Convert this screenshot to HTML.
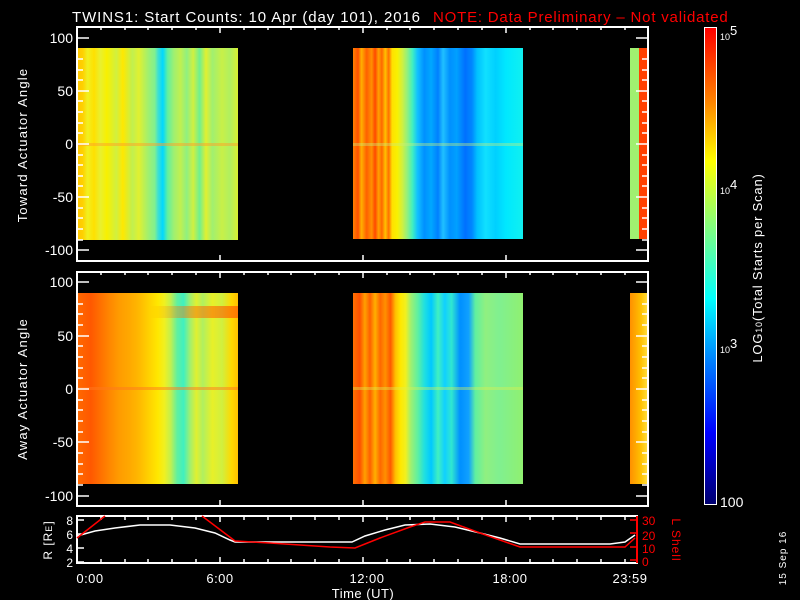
<!DOCTYPE html>
<html><head><meta charset="utf-8"><style>
body{margin:0;background:#000;width:800px;height:600px;overflow:hidden;position:relative;font-family:"Liberation Sans",sans-serif}
.d{position:absolute}
</style></head><body>
<!-- top panel data -->
<div class="d" style="left:78px;top:48px;width:160px;height:192px;background:linear-gradient(90deg,#ffc800 0,#ffd000 3%,#f0f020 6%,#ffe000 10%,#e8f030 14%,#f8f000 18%,#d0f040 24%,#ffe800 28%,#c0f050 34%,#e0f030 38%,#a0f070 44%,#80f090 48%,#40e0d0 50%,#00d8ff 53%,#60f0a0 56%,#a0f070 60%,#c0f050 64%,#90f080 68%,#d0f040 72%,#70f090 76%,#e0f030 80%,#a0f070 84%,#c8f048 90%,#b0f060 95%,#d8f030 100%)"></div>
<div class="d" style="left:353px;top:48px;width:170px;height:191px;background:linear-gradient(90deg,#ff8000 0,#ff5000 3%,#ffb000 5%,#ff6000 8%,#ff9000 11%,#ff4800 13%,#ffa000 15%,#ff6800 17%,#ffc000 19%,#ff7000 21%,#ffe000 23%,#f8f000 26%,#d0f040 29%,#90f080 32%,#40f0c0 35%,#10c0ff 38%,#0090ff 42%,#00a8ff 46%,#0080ff 50%,#20c0ff 53%,#0090ff 57%,#00a0ff 61%,#0070ff 66%,#0088ff 70%,#00c0ff 73%,#10e0ff 78%,#00d0ff 84%,#00e8ff 90%,#10f0f0 100%)"></div>
<div class="d" style="left:630px;top:48px;width:9px;height:191px;background:#a0f070"></div>
<div class="d" style="left:639px;top:48px;width:9px;height:191px;background:#ff4000"></div>
<div class="d" style="left:78px;top:143px;width:160px;height:3px;background:rgba(255,160,40,.5)"></div>
<div class="d" style="left:353px;top:143px;width:170px;height:3px;background:rgba(200,240,120,.4)"></div>
<!-- bottom panel data -->
<div class="d" style="left:78px;top:293px;width:160px;height:191px;background:linear-gradient(90deg,#ff6800 0,#ff5800 8%,#ff7000 14%,#ff8800 20%,#ff9c00 26%,#ffa800 32%,#ffb800 38%,#ffd000 44%,#ffe800 50%,#f0f020 54%,#c0f050 58%,#60f0a0 62%,#40f0c0 66%,#a0f070 70%,#e0f030 74%,#b0f060 78%,#e8f028 84%,#d0f040 90%,#ffd800 96%,#ffc000 100%)"></div>
<div class="d" style="left:150px;top:306px;width:88px;height:12px;background:linear-gradient(90deg,rgba(255,120,0,0),rgba(255,110,0,.45) 40%,rgba(255,90,0,.7))"></div>
<div class="d" style="left:353px;top:293px;width:170px;height:191px;background:linear-gradient(90deg,#ff7000 0,#ff5000 4%,#ffa000 7%,#ff6000 10%,#ffb000 13%,#ff6800 16%,#ff9000 19%,#ff5800 22%,#ffc000 25%,#ffe800 28%,#f0f020 31%,#a0f070 34%,#60f0a0 38%,#20e0e0 42%,#00c8ff 46%,#40f0c0 50%,#10d0ff 54%,#30e8d0 58%,#0090ff 63%,#10a0ff 68%,#60f0a0 72%,#90f080 78%,#80f090 86%,#90f070 100%)"></div>
<div class="d" style="left:630px;top:293px;width:18px;height:191px;background:linear-gradient(90deg,#ff9000,#ffc000 60%,#ffe040)"></div>
<div class="d" style="left:78px;top:387px;width:160px;height:3px;background:rgba(255,120,30,.5)"></div>
<div class="d" style="left:353px;top:387px;width:170px;height:3px;background:rgba(220,240,80,.4)"></div>
<!-- colorbar -->
<div class="d" style="left:704px;top:27px;width:13px;height:478px;box-sizing:border-box;border:1px solid #fff;background:linear-gradient(0deg,#000070 0,#0000ff 15%,#0080ff 30%,#00ffff 43%,#80ff80 58%,#ffff00 72%,#ff8000 85%,#ff0000 100%)"></div>
<svg class="d" style="left:0;top:0" width="800" height="600" font-family="Liberation Sans,sans-serif">
<g fill="none" stroke="#fff" stroke-width="2">
<rect x="77" y="27" width="571" height="234"/>
<rect x="77" y="272" width="571" height="234"/>
<path d="M77 516V563H637V516Z"/>
</g>
<g stroke="#fff" stroke-width="1.5">
<path d="M77 38h12M77 91h12M77 144h12M77 197h12M77 250h12M648 38h-12M648 91h-12M648 144h-12M648 197h-12M648 250h-12"/>
<path d="M77 282h12M77 336h12M77 389h12M77 442h12M77 496h12M648 282h-12M648 336h-12M648 389h-12M648 442h-12M648 496h-12"/>
<path d="M77 59h6M77 70h6M77 80h6M77 101h6M77 112h6M77 123h6M77 133h6M77 155h6M77 165h6M77 176h6M77 186h6M77 208h6M77 218h6M77 229h6M77 240h6M648 59h-6M648 70h-6M648 80h-6M648 101h-6M648 112h-6M648 123h-6M648 133h-6M648 155h-6M648 165h-6M648 176h-6M648 186h-6M648 208h-6M648 218h-6M648 229h-6M648 240h-6"/>
<path d="M77 304h6M77 314h6M77 325h6M77 346h6M77 357h6M77 368h6M77 378h6M77 400h6M77 410h6M77 421h6M77 432h6M77 453h6M77 464h6M77 474h6M77 485h6M648 304h-6M648 314h-6M648 325h-6M648 346h-6M648 357h-6M648 368h-6M648 378h-6M648 400h-6M648 410h-6M648 421h-6M648 432h-6M648 453h-6M648 464h-6M648 474h-6M648 485h-6"/>
<path d="M220 27v6M363 27v6M506 27v6M220 261v-6M363 261v-6M506 261v-6M220 272v6M363 272v6M506 272v6M220 506v-6M363 506v-6M506 506v-6M220 516v6M363 516v6M506 516v6M220 563v-6M363 563v-6M506 563v-6"/>
<path d="M101 27v3M125 27v3M148 27v3M172 27v3M196 27v3M244 27v3M268 27v3M291 27v3M315 27v3M339 27v3M387 27v3M410 27v3M434 27v3M458 27v3M482 27v3M530 27v3M553 27v3M577 27v3M601 27v3M625 27v3"/>
<path d="M101 272v3M125 272v3M148 272v3M172 272v3M196 272v3M244 272v3M268 272v3M291 272v3M315 272v3M339 272v3M387 272v3M410 272v3M434 272v3M458 272v3M482 272v3M530 272v3M553 272v3M577 272v3M601 272v3M625 272v3"/>
<path d="M101 516v4M125 516v4M148 516v4M172 516v4M196 516v4M244 516v4M268 516v4M291 516v4M315 516v4M339 516v4M387 516v4M410 516v4M434 516v4M458 516v4M482 516v4M530 516v4M553 516v4M577 516v4M601 516v4M625 516v4M101 563v-4M125 563v-4M148 563v-4M172 563v-4M196 563v-4M244 563v-4M268 563v-4M291 563v-4M315 563v-4M339 563v-4M387 563v-4M410 563v-4M434 563v-4M458 563v-4M482 563v-4M530 563v-4M553 563v-4M577 563v-4M601 563v-4M625 563v-4"/>
<path d="M77 520h7M77 534h7M77 548h7M77 562h7"/>
</g>
<path d="M637 520h-7M637 533h-7M637 547h-7M637 560h-7" stroke="#f00" stroke-width="1.5"/>
<path d="M637 516V563" stroke="#f00" stroke-width="2"/>
<polyline fill="none" stroke="#fff" stroke-width="1.5" points="77,536 95,531 115,528 140,525 170,525 195,528 215,533 230,540 235,542 352,542 365,536 385,530 405,525 430,524 455,527 480,533 500,538 520,544 610,544 625,542 635,535"/>
<polyline fill="none" stroke="#f00" stroke-width="1.5" points="77,538 105,516"/>
<polyline fill="none" stroke="#f00" stroke-width="1.5" points="202,516 235,541 270,543 300,545 330,547 355,548 380,538 410,527 425,522 450,522 480,533 520,547 625,547 635,538"/>
<g fill="#fff" font-size="14" letter-spacing="1">
<text x="72" y="22" font-size="15" letter-spacing="0.9">TWINS1: Start Counts: 10 Apr (day 101), 2016</text>
<g text-anchor="end" letter-spacing="0"><text x="73" y="43">100</text><text x="73" y="96">50</text><text x="73" y="149">0</text><text x="73" y="202">-50</text><text x="73" y="255">-100</text>
<text x="73" y="287">100</text><text x="73" y="341">50</text><text x="73" y="394">0</text><text x="73" y="447">-50</text><text x="73" y="501">-100</text>
<text x="73" y="525" font-size="12">8</text><text x="73" y="539" font-size="12">6</text><text x="73" y="553" font-size="12">4</text><text x="73" y="567" font-size="12">2</text></g>
<g text-anchor="middle" font-size="13" letter-spacing="0.5"><text x="90" y="583">0:00</text><text x="220" y="583">6:00</text><text x="367" y="583">12:00</text><text x="510" y="583">18:00</text><text x="630" y="583">23:59</text><text x="363" y="598">Time (UT)</text></g>
<text transform="translate(27,145) rotate(-90)" text-anchor="middle" font-size="13" letter-spacing="1.2">Toward Actuator Angle</text>
<text transform="translate(27,389) rotate(-90)" text-anchor="middle" font-size="13" letter-spacing="1.2">Away Actuator Angle</text>
<text transform="translate(52,540) rotate(-90)" text-anchor="middle" font-size="12">R [R<tspan font-size="9">E</tspan>]</text>
<text transform="translate(762,268) rotate(-90)" text-anchor="middle" font-size="13" letter-spacing="0.8">LOG<tspan font-size="9">10</tspan>(Total Starts per Scan)</text>
<text transform="translate(786,558) rotate(-90)" text-anchor="middle" font-size="10">15 Sep 16</text>
<text x="720" y="40" font-size="9" letter-spacing="0">10<tspan font-size="13" dy="-5">5</tspan></text>
<text x="720" y="194" font-size="9" letter-spacing="0">10<tspan font-size="13" dy="-5">4</tspan></text>
<text x="720" y="353" font-size="9" letter-spacing="0">10<tspan font-size="13" dy="-5">3</tspan></text>
<text x="720" y="507" letter-spacing="0">100</text>
</g>
<g fill="#f00" font-size="13"><text x="433" y="22" font-size="15" letter-spacing="0.8">NOTE: Data Preliminary – Not validated</text>
<text x="642" y="525" font-size="12">30</text><text x="642" y="540" font-size="12">20</text><text x="642" y="553" font-size="12">10</text><text x="642" y="566" font-size="12">0</text>
<text transform="translate(672,540) rotate(90)" text-anchor="middle" font-size="12" letter-spacing="1">L Shell</text></g>
</svg>
</body></html>
